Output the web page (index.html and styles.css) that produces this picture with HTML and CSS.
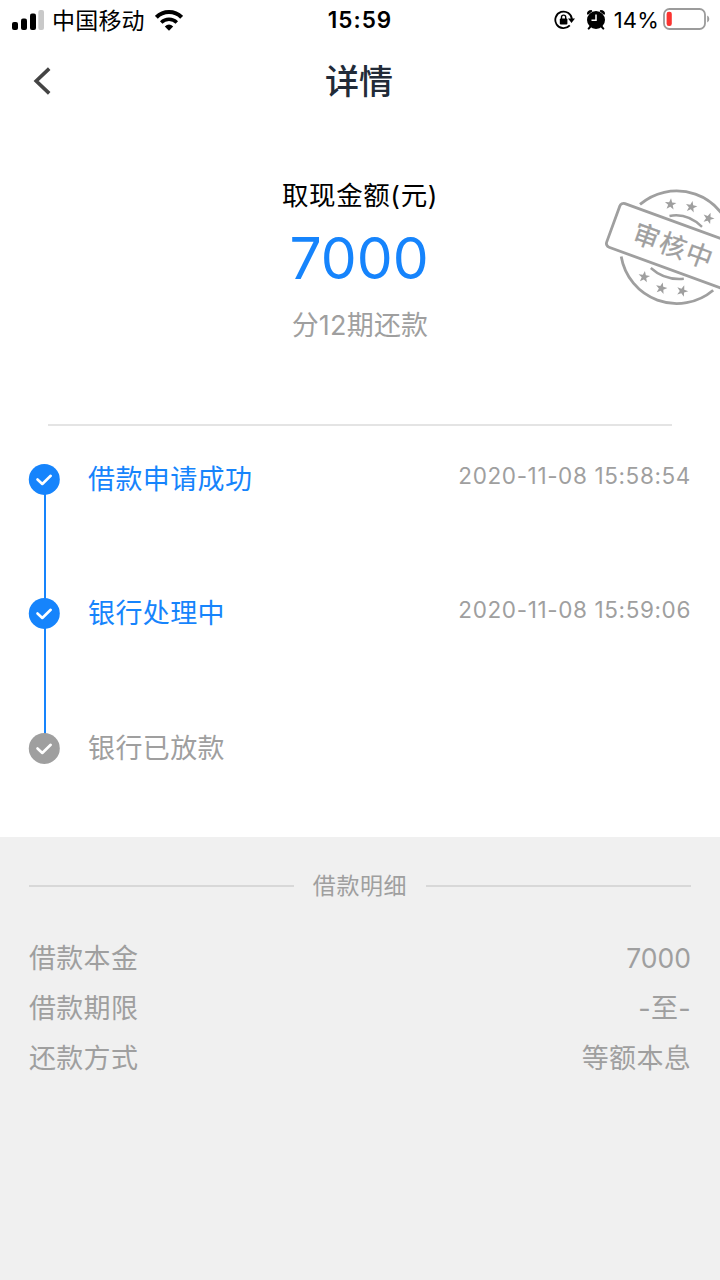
FILE: index.html
```html
<!DOCTYPE html>
<html lang="zh-CN">
<head>
<meta charset="utf-8">
<title>详情</title>
<link rel="stylesheet" href="styles.css">
</head>
<body>
<div class="statusbar">
  <div class="carrier">
    <svg class="signal" width="32" height="20" viewBox="0 0 32 20">
      <rect x="0" y="12" width="6" height="8" rx="2"/>
      <rect x="9" y="8.5" width="6" height="11.5" rx="2"/>
      <rect x="18" y="3.5" width="6" height="16.5" rx="2"/>
      <rect x="26.3" y="0" width="5.7" height="20" rx="2" fill="#c9c9c9"/>
    </svg>
    <span class="operator">中国移动</span>
    <svg class="wifi" width="28" height="21" viewBox="0 0 28 21">
      <g fill="none" stroke="#000" stroke-width="4">
        <path d="M1.4 7.3A17.9 17.9 0 0 1 26.6 7.3"/>
        <path d="M6.2 12.4A11.2 11.2 0 0 1 21.8 12.4" stroke-width="3.5"/>
      </g>
      <path d="M9.8 16.4Q14 12.8 18.2 16.4L14 20.7Z"/>
    </svg>
  </div>
  <div class="clock">15:59</div>
  <div class="indicators">
    <svg width="21" height="20" viewBox="0 0 21 20">
      <path d="M15.8 15.4A8.3 8.3 0 1 1 17.9 9.5" fill="none" stroke="#000" stroke-width="1.8"/>
      <path d="M14 8.6H21L17.5 12.9Z"/>
      <rect x="5.8" y="8.6" width="7.6" height="6" rx="1"/>
      <path d="M7.5 9V7.2A2.1 2.1 0 0 1 11.7 7.2V9" fill="none" stroke="#000" stroke-width="1.4"/>
    </svg>
    <svg class="alarm" width="20" height="21" viewBox="0 0 20 21">
      <circle cx="10" cy="11" r="9"/>
      <path d="M1 5.2Q.6 1.2 5.6 1L6.4 2.2L2 5.8ZM19 5.2Q19.4 1.2 14.4 1L13.6 2.2L18 5.8Z"/>
      <path d="M4.5 17.5L2.7 19.6M15.5 17.5L17.3 19.6" stroke="#000" stroke-width="2" stroke-linecap="round"/>
      <path d="M10 5.5V11.3H5.5" fill="none" stroke="#fff" stroke-width="1.5"/>
    </svg>
    <span class="percent">14%</span>
    <svg class="battery" width="47" height="22" viewBox="0 0 47 22">
      <rect x="1" y="1" width="41" height="20" rx="5.5" fill="#fff" stroke="#9b9b9b" stroke-width="1.8"/>
      <rect x="3.6" y="3.8" width="5.2" height="14.2" rx="2.2" fill="#fb3430"/>
      <path d="M44.2 7.5Q46.3 8.4 46.3 11T44.2 14.5Z" fill="#9b9b9b"/>
    </svg>
  </div>
</div>

<header class="navbar">
  <svg class="back" width="20" height="30" viewBox="0 0 20 30"><path d="M17.2 2.6L4.2 15L17.2 27.4" fill="none" stroke="#444" stroke-width="3.6"/></svg>
  <h1 class="title">详情</h1>
</header>

<section class="summary">
  <div class="caption">取现金额(元)</div>
  <div class="amount">7000</div>
  <div class="periods">分12期还款</div>
  <svg class="stamp" width="130" height="135" viewBox="0 0 130 135">
    <defs><path id="star" d="M0-6L1.5-1.9L5.8-1.8L2.3.8L3.5 4.9L0 2.5L-3.5 4.9L-2.3.8L-5.8-1.8L-1.5-1.9Z"/></defs>
    <g fill="none" stroke="#9f9f9f" stroke-width="2.8">
      <path d="M50 24.4A56.4 56.4 0 0 1 142 57"/>
      <path d="M31.2 76.5A56.4 56.4 0 0 0 123.2 110.2"/>
      <rect x="0" y="0" width="140" height="46.5" rx="4" transform="translate(31.2 22.2) rotate(20)"/>
      <path d="M79.5 36Q97 32.5 112 46.8" stroke-width="2.4"/>
      <path d="M60.8 88Q74.5 100.5 93.8 98.8" stroke-width="2.4"/>
    </g>
    <g fill="#9f9f9f">
      <use href="#star" transform="translate(80.5 24.2) rotate(5)"/>
      <use href="#star" transform="translate(101.3 26.9) rotate(12)"/>
      <use href="#star" transform="translate(118.5 38.3) rotate(20)"/>
      <use href="#star" transform="translate(54.1 96.9) rotate(8)"/>
      <use href="#star" transform="translate(71.3 108.3) rotate(14)"/>
      <use href="#star" transform="translate(92.2 111) rotate(20)"/>
      <text class="stamp-text" transform="translate(83.5 66.4) rotate(20)" x="0" y="9.3" text-anchor="middle">审核中</text>
    </g>
  </svg>
</section>

<ol class="steps">
  <li class="step done">
    <svg class="dot" width="32" height="32" viewBox="0 0 32 32"><circle cx="16.3" cy="16.4" r="15.5"/><path d="M9.5 16.5L14.3 21L22.7 12.8"/></svg>
    <span class="label">借款申请成功</span><time class="time">2020-11-08 15:58:54</time>
  </li>
  <li class="step done">
    <svg class="dot" width="32" height="32" viewBox="0 0 32 32"><circle cx="16.3" cy="16.4" r="15.5"/><path d="M9.5 16.5L14.3 21L22.7 12.8"/></svg>
    <span class="label">银行处理中</span><time class="time">2020-11-08 15:59:06</time>
  </li>
  <li class="step">
    <svg class="dot" width="32" height="32" viewBox="0 0 32 32"><circle cx="16.3" cy="16.4" r="15.5"/><path d="M9.5 16.5L14.3 21L22.7 12.8"/></svg>
    <span class="label">银行已放款</span>
  </li>
</ol>

<section class="details">
  <h2 class="heading">借款明细</h2>
  <dl class="rows">
    <div class="row"><dt>借款本金</dt><dd class="number">7000</dd></div>
    <div class="row"><dt>借款期限</dt><dd>-至-</dd></div>
    <div class="row"><dt>还款方式</dt><dd>等额本息</dd></div>
  </dl>
</section>
</body>
</html>
```
FILE: styles.css
```css
* { box-sizing: border-box; margin: 0; padding: 0; }
body {
  width: 720px;
  height: 1280px;
  display: flex;
  flex-direction: column;
  overflow: hidden;
  background: #fff;
  color: #000;
  font-family: Inter, "Noto Sans CJK SC", sans-serif;
}
svg { display: block; flex: none; }

.statusbar {
  height: 40px;
  display: grid;
  grid-template-columns: 1fr auto 1fr;
  align-items: center;
  padding: 0 10px 2px 12px;
  line-height: 38px;
}
.carrier, .indicators { display: flex; align-items: center; }
.signal { margin-top: -1px; }
.indicators { justify-content: flex-end; }
.operator { margin-left: 8px; font-size: 23px; letter-spacing: .2px; padding-top: 2px; }
.wifi { margin-left: 10px; }
.clock { font-size: 22.5px; font-weight: 600; letter-spacing: 1px; margin-left: -2px; }
.alarm { margin-left: 11px; margin-top: -2px; }
.percent { margin-left: 8px; font-size: 22px; letter-spacing: .2px; }
.battery { margin-left: 4px; margin-top: -2px; }

.navbar {
  height: 80px;
  display: grid;
  grid-template-columns: 60px 1fr 60px;
  align-items: center;
  padding: 0 32px;
}
.title {
  text-align: center;
  font-size: 34px;
  line-height: 80px;
  padding-top: 2px;
  margin-left: -2px;
  font-weight: 500;
  color: #222b38;
}

.summary {
  position: relative;
  height: 306px;
  margin: 0 48px;
  padding-top: 55px;
  border-bottom: 2px solid #e4e4e4;
  text-align: center;
}
.caption { font-size: 26.5px; line-height: 40px; letter-spacing: .6px; }
.amount { font-size: 57px; line-height: 88px; color: #1684fc; margin-left: -2px; }
.periods { font-size: 27px; line-height: 46px; letter-spacing: .2px; color: #9f9f9f; }
.stamp { position: absolute; top: 60px; right: -48px; }
.stamp-text { font-size: 26.5px; letter-spacing: 1.5px; font-weight: 400; stroke: #9f9f9f; stroke-width: .3px; }

.steps {
  height: 411px;
  padding: 37px 29px 0 28px;
  list-style: none;
}
.step {
  position: relative;
  height: 134.4px;
  display: flex;
  align-items: flex-start;
  color: #9f9f9f;
}
.dot { position: relative; z-index: 1; }
.dot circle { fill: #9f9f9f; }
.dot path { fill: none; stroke: #fff; stroke-width: 2.6; stroke-linecap: round; stroke-linejoin: round; }
.done .dot circle { fill: #1684fc; }
.done::before {
  content: "";
  position: absolute;
  left: 16px;
  top: 16px;
  width: 2px;
  height: 134.5px;
  background: #1684fc;
}
.label { margin-left: 28px; font-size: 27px; letter-spacing: .4px; line-height: 33px; }
.done .label { color: #1684fc; }
.time { margin-left: auto; font-size: 22.5px; letter-spacing: .62px; line-height: 26px; }

.details {
  flex: 1;
  padding: 27px 29px 0;
  background: #f0f0f0;
  color: #9f9f9f;
}
.heading {
  display: flex;
  align-items: center;
  gap: 19px;
  font-size: 23px;
  font-weight: 400;
  line-height: 44px;
  letter-spacing: .6px;
}
.heading::before, .heading::after {
  content: "";
  flex: 1;
  height: 2px;
  background: #d8d8d8;
}
.rows { margin-top: 26px; }
.row {
  height: 50px;
  display: flex;
  justify-content: space-between;
  font-size: 27px;
  line-height: 50px;
  letter-spacing: .3px;
}
.row .number { font-size: 26.5px; line-height: 48px; letter-spacing: 0; }
```
